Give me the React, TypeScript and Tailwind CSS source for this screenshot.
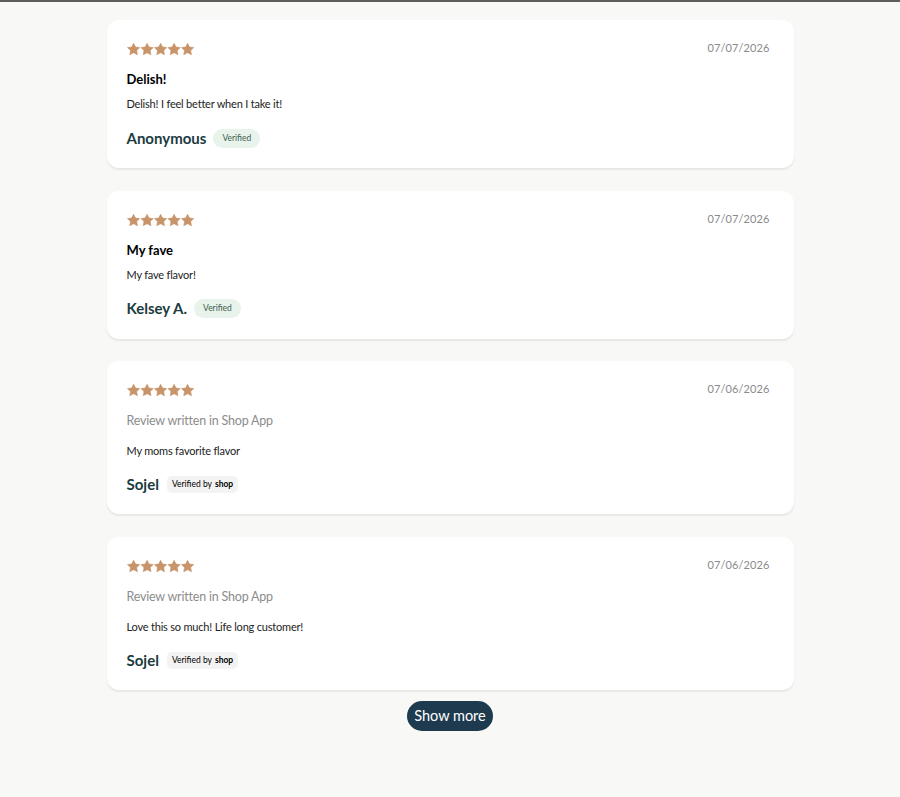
import React from 'react';

type Review = {
  date: string;
  title?: string;
  body: string;
  name: string;
  shop?: boolean;
};

const reviews: Review[] = [
  { date: '07/07/2026', title: 'Delish!', body: 'Delish! I feel better when I take it!', name: 'Anonymous' },
  { date: '07/07/2026', title: 'My fave', body: 'My fave flavor!', name: 'Kelsey A.' },
  { date: '07/06/2026', body: 'My moms favorite flavor', name: 'Sojel', shop: true },
  { date: '07/06/2026', body: 'Love this so much! Life long customer!', name: 'Sojel', shop: true },
];

// chunky five-point star, ~13px wide
const starPath =
  'M6.6 0.3l1.95 3.75 4.2 0.55-3.05 2.95 0.75 4.15-3.85-2-3.85 2 0.75-4.15L0.45 4.6l4.2-0.55z';

const Stars = () => (
  <svg width="68" height="13" viewBox="0 0 68 13" className="block">
    {[0, 1, 2, 3, 4].map((i) => (
      <path
        key={i}
        d={starPath}
        transform={`translate(${i * 13.5} 0)`}
        fill="#c8946a"
        stroke="#c8946a"
        strokeWidth="0.6"
        strokeLinejoin="round"
      />
    ))}
  </svg>
);

const ReviewCard = ({ review }: { review: Review }) => (
  <div className="bg-white rounded-xl shadow-[0_2px_2px_rgba(0,0,0,0.07)] pl-5 pr-6 pt-[23px] pb-5">
    <div className="flex items-start justify-between">
      <Stars />
      <span className="text-[11px] leading-4 text-[#8a8a8a] tracking-[0.1px] -mt-[3px]">{review.date}</span>
    </div>
    {review.title ? (
      <div className="mt-[14px] text-[13px] leading-[18px] font-bold text-black">{review.title}</div>
    ) : (
      <div className="mt-[15px] text-[12.5px] leading-[18px] text-[#8c8c8c] tracking-[-0.2px]">
        Review written in Shop App
      </div>
    )}
    <div
      className={`${review.title ? 'mt-[8px]' : 'mt-[13px]'} text-[11px] leading-4 text-[#222] tracking-[-0.2px]`}
    >
      {review.body}
    </div>
    <div className={`${review.title ? 'mt-[16px]' : 'mt-[15px]'} flex items-center h-5`}>
      <span className="text-[15px] font-bold text-[#1c3b40]">{review.name}</span>
      {review.shop ? (
        <span className="ml-2 px-[5px] h-[17px] flex items-center rounded-[5px] bg-[#f3f3f3] text-[8.5px] text-black">
          Verified by <span className="ml-[3px] font-bold">shop</span>
        </span>
      ) : (
        <span className="ml-[7px] px-[9px] h-[19px] flex items-center rounded-full bg-[#e8f3ec] text-[8.5px] text-[#3d5e4f]">
          Verified
        </span>
      )}
    </div>
  </div>
);

export default function App() {
  return (
    <div
      className="min-h-[797px] bg-[#f8f8f6] text-black"
      style={{ fontFamily: 'Lato, "Noto Sans", sans-serif' }}
    >
      <div className="h-[2px] bg-[#5e5e5e]" />
      <div className="mx-auto w-[687px] pt-[18px] flex flex-col gap-[22.7px]">
        {reviews.map((r, i) => (
          <ReviewCard key={i} review={r} />
        ))}
      </div>
      <div className="flex justify-center mt-[11px]">
        <button className="h-[30px] px-[7px] rounded-full bg-[#1d3a4f] text-white text-[14.5px] leading-none">
          Show more
        </button>
      </div>
    </div>
  );
}
